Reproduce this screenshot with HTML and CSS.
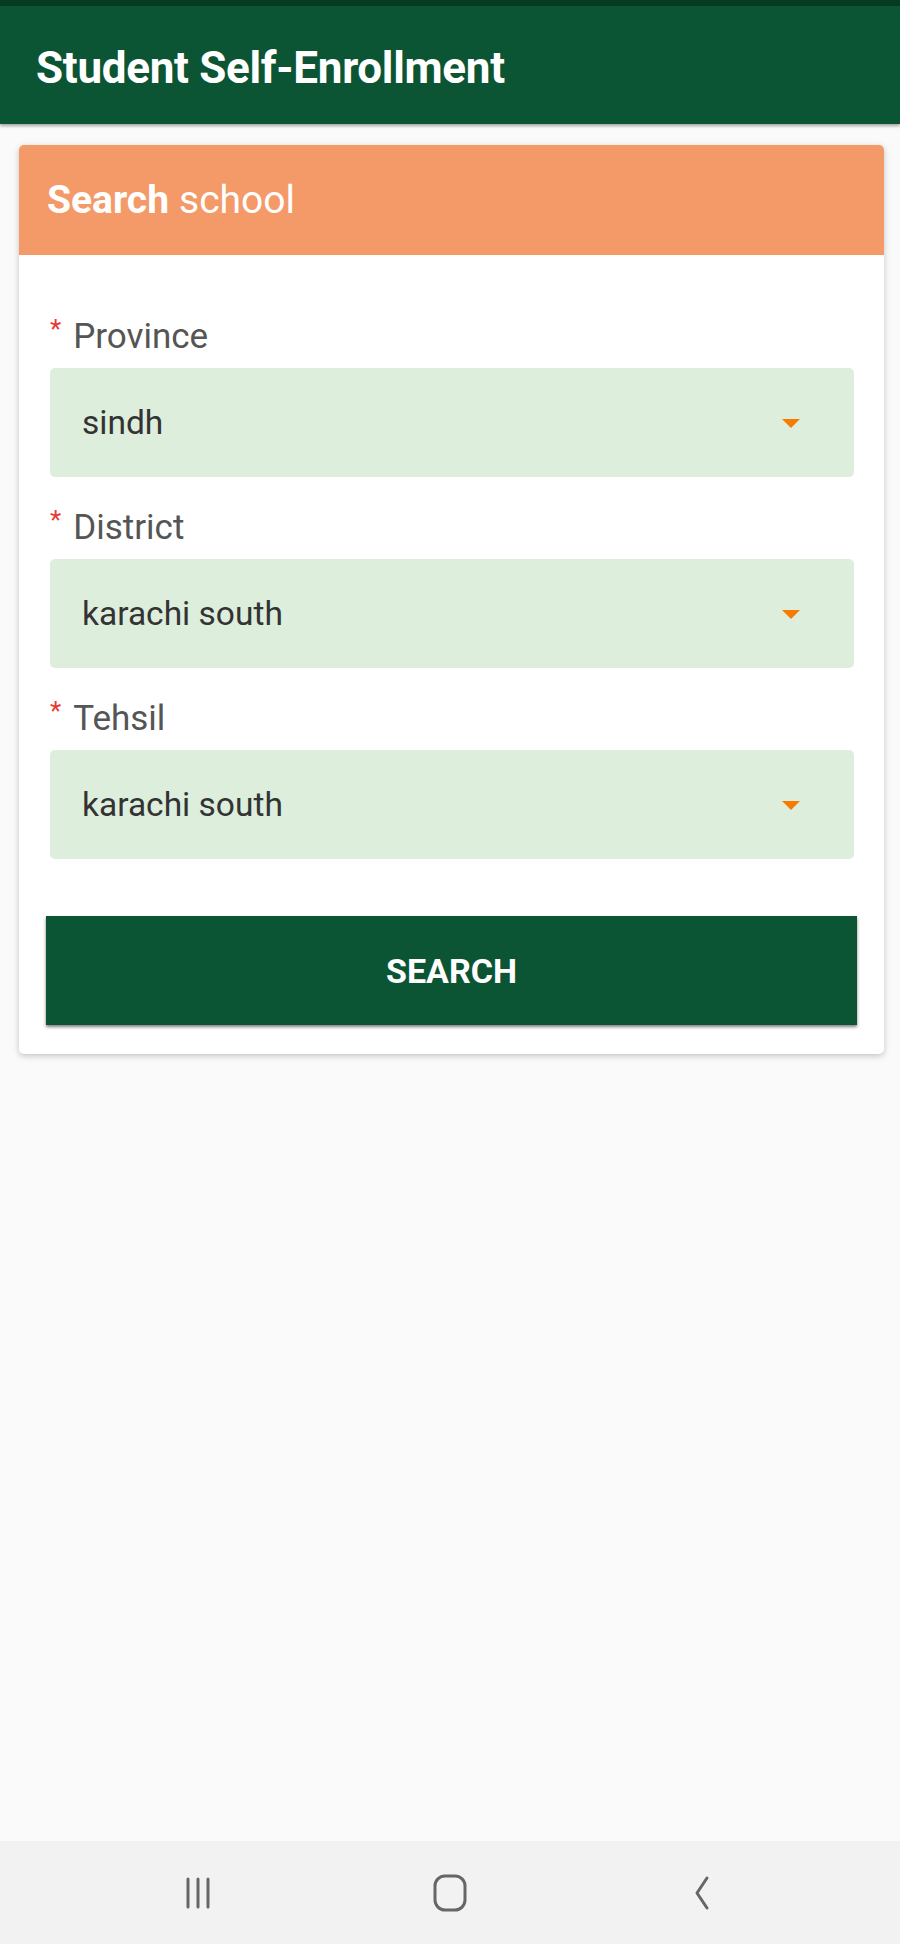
FILE: index.html
```html
<!DOCTYPE html>
<html lang="en">
<head>
    <meta charset="UTF-8">
    <title>Student Self-Enrollment</title>
    <link rel="stylesheet" href="styles.css">
</head>
<body>
    <div class="status"></div>
    <header class="appbar">
        <h1>Student Self-Enrollment</h1>
    </header>

    <main class="content">
        <div class="card">
            <div class="card-head">
                <b>Search</b> school
            </div>
            <div class="card-body">
                <div class="field">
                    <label><span class="req">*</span>Province</label>
                    <div class="select">
                        <span>sindh</span>
                        <i class="caret"></i>
                    </div>
                </div>
                <div class="field">
                    <label><span class="req">*</span>District</label>
                    <div class="select">
                        <span>karachi south</span>
                        <i class="caret"></i>
                    </div>
                </div>
                <div class="field">
                    <label><span class="req">*</span>Tehsil</label>
                    <div class="select">
                        <span>karachi south</span>
                        <i class="caret"></i>
                    </div>
                </div>
                <button class="search-btn">SEARCH</button>
            </div>
        </div>
    </main>

    <!-- 안드로이드 하단 네비게이션 바 -->
    <nav class="navbar">
        <svg width="36" height="40" viewBox="0 0 36 40">
            <path d="M8 6v28M18 6v28M28 6v28" stroke="#666" stroke-width="3" stroke-linecap="round" fill="none"/>
        </svg>
        <svg width="40" height="40" viewBox="0 0 40 40">
            <rect x="5" y="3" width="30" height="34" rx="10" stroke="#666" stroke-width="3" fill="none"/>
        </svg>
        <svg width="36" height="40" viewBox="0 0 36 40">
            <path d="M23 5L13 20l10 15" stroke="#666" stroke-width="3" stroke-linecap="round" stroke-linejoin="round" fill="none"/>
        </svg>
    </nav>
</body>
</html>
```

FILE: styles.css
```css
*{
    box-sizing: border-box;
    margin: 0;
    padding: 0;
}
html, body{
    height: 100%;
}
body{
    display: flex;
    flex-direction: column;
    background-color: #fafafa;
    font-family: Roboto, "Liberation Sans", sans-serif;
}
.status{
    height: 6px;
    background-color: #063a21;
}
.appbar{
    height: 118px;
    background-color: #0c5534;
    display: flex;
    align-items: center;
    padding-left: 36px;
    padding-top: 6px;
    box-shadow: 0 2px 3px rgba(0,0,0,0.35);
}
.appbar h1{
    color: #fff;
    font-size: 44px;
    font-weight: 700;
    letter-spacing: -0.3px;
}
.content{
    flex: 1;
    padding: 21px 16px 0 19px;
}
.card{
    background-color: #fff;
    border-radius: 5px;
    overflow: hidden;
    box-shadow: 0 2px 6px rgba(0,0,0,0.22);
}
.card-head{
    height: 110px;
    background-color: #f39a68;
    color: #fff;
    font-size: 39px;
    display: flex;
    align-items: center;
    padding-left: 28px;
}
.card-head b{
    font-weight: 700;
    margin-right: 10px;
}
.card-body{
    padding: 63px 27px 29px 27px;
}
.field{
    margin-bottom: 32px;
}
.field label{
    display: flex;
    align-items: center;
    font-size: 35px;
    color: #555;
    margin-bottom: 14px;
    height: 36px;
}
.req{
    color: #e53935;
    font-size: 26px;
    margin-left: 4px;
    margin-right: 12px;
    align-self: flex-start;
    margin-top: -4px;
}
.select{
    height: 109px;
    margin-left: 4px;
    margin-right: 3px;
    background-color: #deeedd;
    border-radius: 5px;
    display: flex;
    align-items: center;
    justify-content: space-between;
    padding: 0 54px 0 32px;
    font-size: 33.5px;
    color: #333;
}
.caret{
    width: 0;
    height: 0;
    border-left: 9px solid transparent;
    border-right: 9px solid transparent;
    border-top: 9px solid #f57c00;
    margin-top: 2px;
}
.search-btn{
    display: block;
    width: 100%;
    height: 109px;
    margin-top: 57px;
    border: none;
    background-color: #0c5534;
    color: #fff;
    font-family: Roboto, "Liberation Sans", sans-serif;
    font-size: 34px;
    font-weight: 700;
    box-shadow: 0 2px 3px rgba(0,0,0,0.5);
}
.navbar{
    height: 103px;
    background-color: #f2f2f2;
    display: flex;
    align-items: center;
    justify-content: center;
    gap: 214px;
}
```
